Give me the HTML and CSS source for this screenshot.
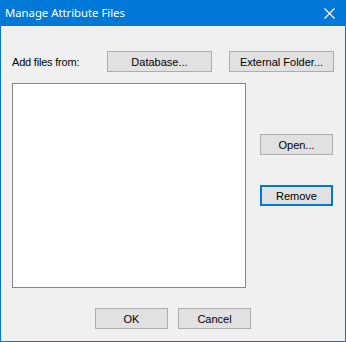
FILE: index.html
```html
<!DOCTYPE html>
<html lang="en">
<head>
  <meta charset="UTF-8">
  <title>Manage Attribute Files</title>
  <link rel="stylesheet" href="styles.css">
</head>
<body>

<div class="window">
  <div class="titlebar">
    <span class="title">Manage Attribute Files</span>
    <svg class="close" width="11" height="11" viewBox="0 0 11 11">
      <path d="M0.5 0.5 L10.5 10.5 M10.5 0.5 L0.5 10.5" stroke="#fff" stroke-width="1.1" fill="none"/>
    </svg>
  </div>

  <div class="client">
    <div class="source-row">
      <span class="label">Add files from:</span>
      <button class="btn wide">Database...</button>
      <button class="btn wide">External Folder...</button>
    </div>

    <div class="middle">
      <div class="listbox"></div>
      <div class="side">
        <button class="btn">Open...</button>
        <button class="btn focused">Remove</button>
      </div>
    </div>

    <div class="footer">
      <button class="btn">OK</button>
      <button class="btn">Cancel</button>
    </div>
  </div>
</div>

</body>
</html>
```

FILE: styles.css
```css
html, body { margin: 0; padding: 0; }
body { width: 346px; height: 342px; overflow: hidden; background: #f0f0f0; }

.window {
  width: 346px;
  height: 342px;
  box-sizing: border-box;
  border: 1px solid #0078d7;
  border-top: none;
  background: #f0f0f0;
  display: flex;
  flex-direction: column;
}

.titlebar {
  height: 26px;
  margin: 0 -1px;
  background: #0078d7;
  display: flex;
  align-items: center;
  justify-content: space-between;
  padding: 0 11px 0 5px;
}
.title {
  color: #fff;
  font-family: "Noto Sans", sans-serif;
  font-size: 11.3px;
  margin-top: -1px;
}
.close { display: block; }

.client {
  padding-top: 25px;
  font-family: "Liberation Sans", Arial, sans-serif;
  font-size: 11px;
}

.source-row {
  display: flex;
  align-items: center;
  padding-left: 11px;
}
.label { width: 95px; color: #000; letter-spacing: -0.2px; }

.btn {
  height: 21px;
  width: 73px;
  box-sizing: border-box;
  border: 1px solid #adadad;
  background: #e1e1e1;
  color: #000;
  font-family: "Liberation Sans", Arial, sans-serif;
  font-size: 11px;
  padding: 0;
  margin: 0;
}
.btn.wide { width: 105px; }
.btn.wide + .btn.wide { margin-left: 17px; }
.btn.focused { border: 2px solid #0078d7; }

.middle {
  display: flex;
  margin-top: 11px;
  padding-left: 11px;
}
.listbox {
  width: 234px;
  height: 205px;
  box-sizing: border-box;
  border: 1px solid #828790;
  background: #fff;
}
.side {
  display: flex;
  flex-direction: column;
  gap: 30px;
  margin-left: 14px;
  padding-top: 51px;
}

.footer {
  display: flex;
  justify-content: center;
  gap: 10px;
  margin-top: 20px;
}
```
